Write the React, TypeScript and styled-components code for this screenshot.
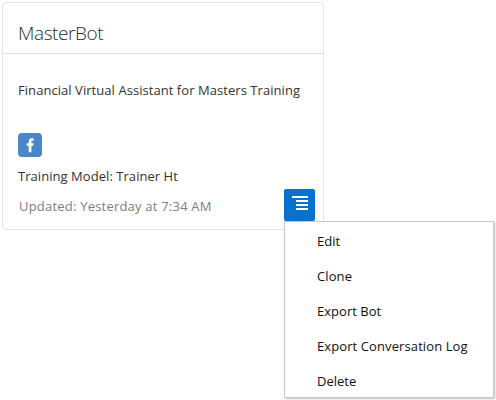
import React from "react";
import styled, { createGlobalStyle } from "styled-components";

const GlobalStyle = createGlobalStyle`
  * { box-sizing: border-box; }
  body {
    margin: 0;
    background: #fff;
    font-family: "Open Sans", "Noto Sans", sans-serif;
    font-size: 13px;
    overflow: hidden;
  }
`;

const Page = styled.main`
  width: 496px;
  height: 400px;
  padding: 2px;
`;

const Card = styled.article`
  position: relative;
  width: 322px;
  height: 228px;
  border: 1px solid #e3e4e6;
  border-radius: 5px;
  background: #fff;
`;

const CardHeader = styled.header`
  height: 51px;
  padding: 16px 15px 0;
  border-bottom: 1px solid #dcdfe1;
`;

const Title = styled.h1`
  margin: 0;
  font-size: 19px;
  line-height: 28px;
  font-weight: 300;
  letter-spacing: -0.42px;
  color: #2b2b2b;
`;

const CardBody = styled.div`
  display: flex;
  flex-direction: column;
  align-items: flex-start;
  padding: 26px 15px 0;
`;

const Line = styled.p<{ $spacing: number; $muted?: boolean }>`
  margin: 0;
  height: 20px;
  line-height: 20px;
  white-space: nowrap;
  letter-spacing: ${(p) => p.$spacing}px;
  color: ${(p) => (p.$muted ? "#7d7d7d" : "#333")};
  padding-left: ${(p) => (p.$muted ? 1 : 0)}px;
`;

const Channel = styled.span`
  display: block;
  width: 24px;
  height: 24px;
  margin: 33px 0 9px;
  border-radius: 4px;
  background: #4a87c7;
  svg { display: block; }
`;

const Details = styled.div`
  display: flex;
  flex-direction: column;
  gap: 10px;
`;

const MenuAnchor = styled.div`
  position: absolute;
  left: 281px;
  top: 186px;
`;

const MenuButton = styled.button`
  display: block;
  width: 31px;
  height: 32px;
  padding: 0;
  border: 0;
  border-radius: 2px;
  background: #0572ce;
  svg { display: block; }
`;

const Menu = styled.ul`
  width: 210px;
  height: 177px;
  margin: 0;
  padding: 2px 0 0;
  list-style: none;
  border: 1px solid #c4cace;
  background: #fff;
  box-shadow: 1px 1px 2px rgba(0, 0, 0, 0.25);
`;

const MenuItem = styled.li<{ $spacing: number }>`
  height: 35px;
  padding-left: 32px;
  line-height: 35px;
  white-space: nowrap;
  letter-spacing: ${(p) => p.$spacing}px;
  color: #111;
`;

const items = [
  { label: "Edit", spacing: 0 },
  { label: "Clone", spacing: 0.1 },
  { label: "Export Bot", spacing: 0.03 },
  { label: "Export Conversation Log", spacing: 0.1 },
  { label: "Delete", spacing: 0 },
];

export default function App() {
  return (
    <Page>
      <GlobalStyle />
      <Card>
        <CardHeader>
          <Title>MasterBot</Title>
        </CardHeader>
        <CardBody>
          <Line $spacing={0.055}>Financial Virtual Assistant for Masters Training</Line>
          <Channel>
            <svg width="24" height="24" viewBox="0 0 24 24" aria-label="Facebook">
              <path
                fill="#fff"
                d="M10.700 19.200v-6.400H8.700v-2.500h2V8.600c0-2.100 1.300-3.300 3.200-3.300.8 0 1.500.1 1.800.2v2.200h-1.200c-.9 0-1.100.4-1.100 1.100v1.500h2.200l-.3 2.500h-1.900v6.400z"
              />
            </svg>
          </Channel>
          <Details>
            <Line $spacing={0.05}>Training Model: Trainer Ht</Line>
            <Line $spacing={0.21} $muted>Updated: Yesterday at 7:34 AM</Line>
          </Details>
        </CardBody>
        <MenuAnchor>
          <MenuButton aria-label="Options">
            <svg width="31" height="32" viewBox="0 0 31 32">
              <path fill="#fff" d="M8 7h16v2H8zM12 11h12v2H12zM12 15h12v2H12zM12 19h12v2H12z" />
            </svg>
          </MenuButton>
          <Menu>
            {items.map((item) => (
              <MenuItem key={item.label} $spacing={item.spacing}>
                {item.label}
              </MenuItem>
            ))}
          </Menu>
        </MenuAnchor>
      </Card>
    </Page>
  );
}
